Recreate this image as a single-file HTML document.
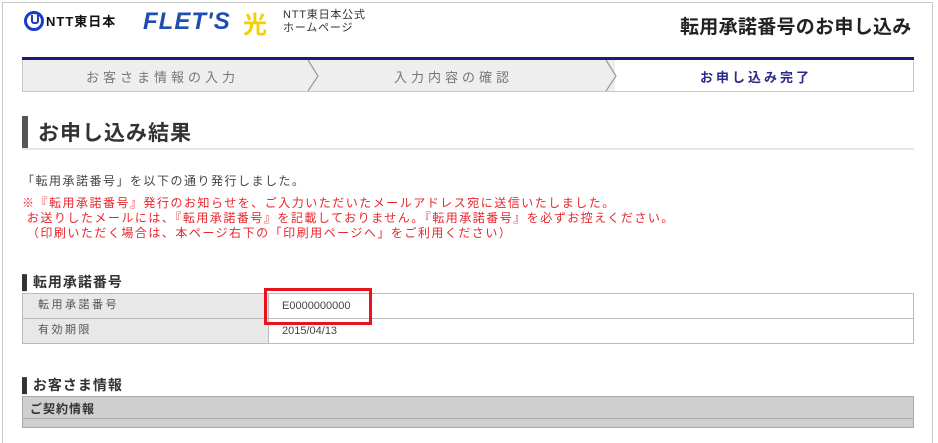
<!DOCTYPE html><html><head><meta charset="utf-8"><style>
body{margin:0;width:938px;height:423px;overflow:hidden;background:#fff;font-family:"Liberation Sans","Noto Sans CJK JP",sans-serif;position:relative}
.a{position:absolute;white-space:nowrap}
</style></head><body>
<div class="a" style="left:2px;top:2px;width:929px;height:440px;border:1px solid #c8c8c8;border-bottom:none"></div>
<!-- logo -->
<div class="a" style="left:24px;top:11px;width:14px;height:14px;border:3px solid #1a3bc8;border-radius:50%"></div>
<div class="a" style="left:31px;top:15px;width:4px;height:7px;border:2px solid #1a3bc8;border-top:none;border-radius:0 0 3px 3px"></div>
<div class="a" style="left:46px;top:11px;font-size:13px;font-weight:bold;color:#111;letter-spacing:1px">NTT東日本</div>
<div class="a" style="left:143px;top:8px;font-size:24px;font-weight:bold;font-style:italic;color:#1e4fb0;letter-spacing:1px">FLET'S</div>
<div class="a" style="left:243px;top:5px;font-size:24px;font-weight:bold;color:#f5d000">光</div>
<div class="a" style="left:283px;top:9px;font-size:11px;line-height:13px;color:#333;letter-spacing:0.8px">NTT東日本公式<br>ホームページ</div>
<div class="a" style="left:680px;top:12px;font-size:19px;font-weight:bold;color:#222;letter-spacing:0.3px">転用承諾番号のお申し込み</div>
<!-- steps -->
<div class="a" style="left:22px;top:57px;width:892px;height:3px;background:#1a1a7a"></div>
<div class="a" style="left:22px;top:60px;width:890px;height:31px;border:1px solid #c8c8c8;border-top:none;background:#fff"></div>
<div class="a" style="left:23px;top:60px;width:592px;height:31px;background:#eeeeee"></div>
<svg class="a" style="left:300px;top:60px" width="320" height="32"><polyline points="8,0 18,16 8,31" fill="none" stroke="#999" stroke-width="1.2"/><polyline points="306,0 316,16 306,31" fill="none" stroke="#999" stroke-width="1.2"/></svg>
<div class="a" style="left:86px;top:67px;font-size:13px;color:#777;letter-spacing:4px">お客さま情報の入力</div>
<div class="a" style="left:394px;top:67px;font-size:13px;color:#777;letter-spacing:4px">入力内容の確認</div>
<div class="a" style="left:700px;top:67px;font-size:13px;color:#2a2a8a;font-weight:bold;letter-spacing:3px">お申し込み完了</div>
<!-- heading -->
<div class="a" style="left:22px;top:116px;width:6px;height:33px;background:#555"></div>
<div class="a" style="left:22px;top:148px;width:892px;height:2px;background:#e6e6e6"></div>
<div class="a" style="left:38px;top:117px;font-size:21px;font-weight:bold;color:#333;letter-spacing:1px">お申し込み結果</div>
<div class="a" style="left:22px;top:172px;font-size:12px;color:#444;letter-spacing:1.5px">「転用承諾番号」を以下の通り発行しました。</div>
<div class="a" style="left:22px;top:196px;font-size:12px;line-height:15px;color:#e8262c;letter-spacing:1.5px">※『転用承諾番号』発行のお知らせを、ご入力いただいたメールアドレス宛に送信いたしました。<br>&nbsp;お送りしたメールには、『転用承諾番号』を記載しておりません。『転用承諾番号』を必ずお控えください。<br>&nbsp;（印刷いただく場合は、本ページ右下の「印刷用ページへ」をご利用ください）</div>
<div class="a" style="left:22px;top:272px;font-size:14px;font-weight:bold;color:#333;letter-spacing:1px">▌転用承諾番号</div>
<!-- table -->
<div class="a" style="left:22px;top:293px;width:890px;height:49px;border:1px solid #bbb"></div>
<div class="a" style="left:23px;top:294px;width:245px;height:49px;background:#e8e8e8;border-right:1px solid #bbb"></div>
<div class="a" style="left:22px;top:318px;width:892px;height:1px;background:#bbb"></div>
<div class="a" style="left:38px;top:298px;font-size:11px;line-height:14px;color:#555;letter-spacing:2.5px">転用承諾番号</div>
<div class="a" style="left:38px;top:323px;font-size:11px;line-height:14px;color:#555;letter-spacing:2.5px">有効期限</div>
<div class="a" style="left:282px;top:299px;font-size:11px;line-height:14px;color:#444">E0000000000</div>
<div class="a" style="left:282px;top:324px;font-size:11px;line-height:14px;color:#444">2015/04/13</div>
<div class="a" style="left:264px;top:288px;width:102px;height:31px;border:3px solid #e8141c"></div>
<div class="a" style="left:22px;top:375px;font-size:14px;font-weight:bold;color:#333;letter-spacing:1px">▌お客さま情報</div>
<div class="a" style="left:22px;top:396px;width:890px;height:30px;border:1px solid #aaa;background:#cfcfcf"></div>
<div class="a" style="left:23px;top:418px;width:890px;height:1px;background:#aaa"></div>
<div class="a" style="left:30px;top:400px;font-size:12px;font-weight:bold;color:#333;letter-spacing:1px">ご契約情報</div>
</body></html>
